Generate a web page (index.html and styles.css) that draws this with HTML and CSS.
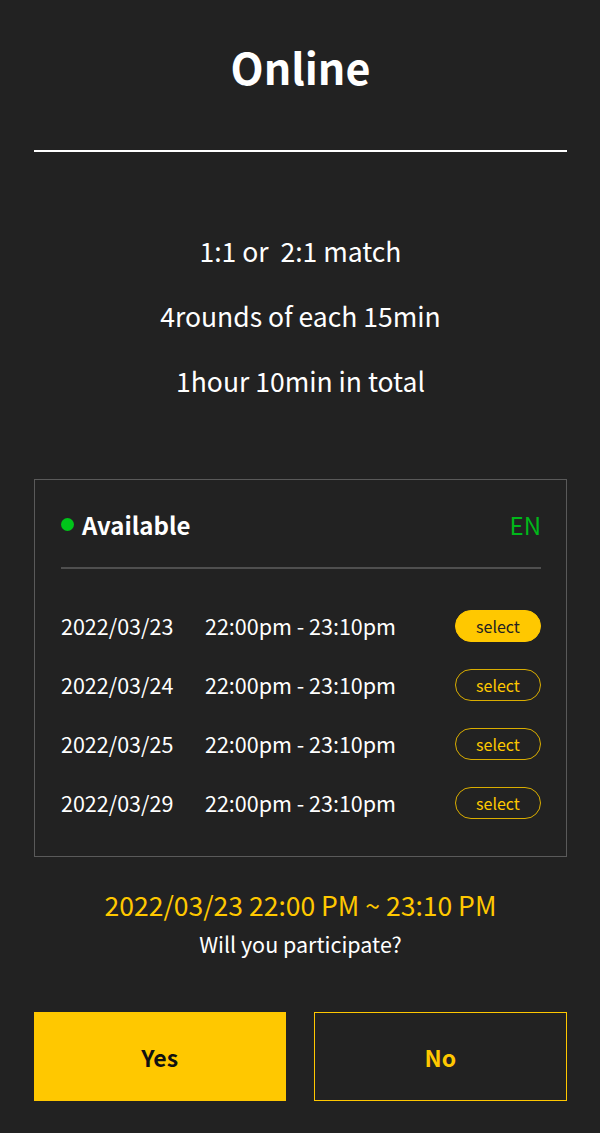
FILE: index.html
```html
<!DOCTYPE html>
<html lang="en">
<head>
<meta charset="utf-8">
<title>Online</title>
<link rel="stylesheet" href="styles.css">
</head>
<body>
<main class="page">
  <h1 class="title">Online</h1>
  <hr class="rule">
  <section class="info">
    <p>1:1 or&nbsp; 2:1 match</p>
    <p>4rounds of each 15min</p>
    <p>1hour 10min in total</p>
  </section>
  <section class="card">
    <div class="card-head">
      <div class="status"><span class="dot"></span>Available</div>
      <div class="lang">EN</div>
    </div>
    <div class="divider"></div>
    <ul class="slots">
      <li class="slot"><span class="date">2022/03/23</span><span class="time">22:00pm - 23:10pm</span><button class="sel active">select</button></li>
      <li class="slot"><span class="date">2022/03/24</span><span class="time">22:00pm - 23:10pm</span><button class="sel">select</button></li>
      <li class="slot"><span class="date">2022/03/25</span><span class="time">22:00pm - 23:10pm</span><button class="sel">select</button></li>
      <li class="slot"><span class="date">2022/03/29</span><span class="time">22:00pm - 23:10pm</span><button class="sel">select</button></li>
    </ul>
  </section>
  <p class="chosen">2022/03/23 22:00 PM ~ 23:10 PM</p>
  <p class="question">Will you participate?</p>
  <div class="actions">
    <button class="btn yes">Yes</button>
    <button class="btn no">No</button>
  </div>
</main>
</body>
</html>
```
FILE: styles.css
```css
* { box-sizing: border-box; }
html, body {
  margin: 0;
  padding: 0;
  background: #222222;
}
body {
  font-family: "Noto Sans CJK JP", "Noto Sans", sans-serif;
  color: #ffffff;
}
.page {
  width: 600px;
  padding: 0 33px 0 34px;
}
.title {
  margin: 0;
  padding-top: 38px;
  height: 96px;
  line-height: 56px;
  font-size: 43px;
  font-weight: 700;
  text-align: center;
}
.rule {
  margin: 54px 0 0;
  border: 0;
  height: 2px;
  background: #ffffff;
}
.info {
  padding-top: 66px;
  text-align: center;
}
.info p {
  margin: 0;
  font-size: 26.5px;
  line-height: 65px;
}
.card {
  margin-top: 66px;
  border: 1px solid #5a5a5a;
  padding: 0 25px 0 26px;
  height: 378px;
}
.card-head {
  display: flex;
  justify-content: space-between;
  align-items: center;
  height: 87px;
  padding-top: 2px;
}
.status {
  display: flex;
  align-items: center;
  font-size: 24px;
  font-weight: 700;
}
.dot {
  width: 13px;
  height: 13px;
  border-radius: 50%;
  background: #00c41a;
  margin-right: 8px;
}
.lang {
  color: #00b81a;
  font-size: 24px;
}
.divider {
  height: 2px;
  background: #4f4f4f;
}
.slots {
  list-style: none;
  margin: 0;
  padding: 27px 0 0;
}
.slot {
  display: flex;
  align-items: center;
  height: 59px;
  font-size: 21.5px;
}
.date { width: 144px; }
.time { flex: 1; }
.sel {
  width: 86px;
  height: 32px;
  border-radius: 16px;
  border: 1.5px solid #d9ad00;
  background: transparent;
  color: #ffc800;
  font-family: inherit;
  font-size: 16px;
  padding: 0;
}
.sel.active {
  background: #ffc800;
  border-color: #ffc800;
  color: #222222;
}
.chosen {
  margin: 30px 0 0;
  text-align: center;
  color: #ffc800;
  font-size: 26.5px;
  line-height: 36px;
}
.question {
  margin: 6px 0 0;
  text-align: center;
  font-size: 21.5px;
  line-height: 30px;
}
.actions {
  display: flex;
  gap: 28px;
  margin-top: 53px;
}
.btn {
  flex: 1;
  height: 89px;
  font-family: inherit;
  font-size: 23px;
  font-weight: 700;
}
.yes {
  background: #ffc800;
  border: 0;
  color: #111111;
}
.no {
  background: transparent;
  border: 1.5px solid #ffc800;
  color: #ffc800;
}
```
